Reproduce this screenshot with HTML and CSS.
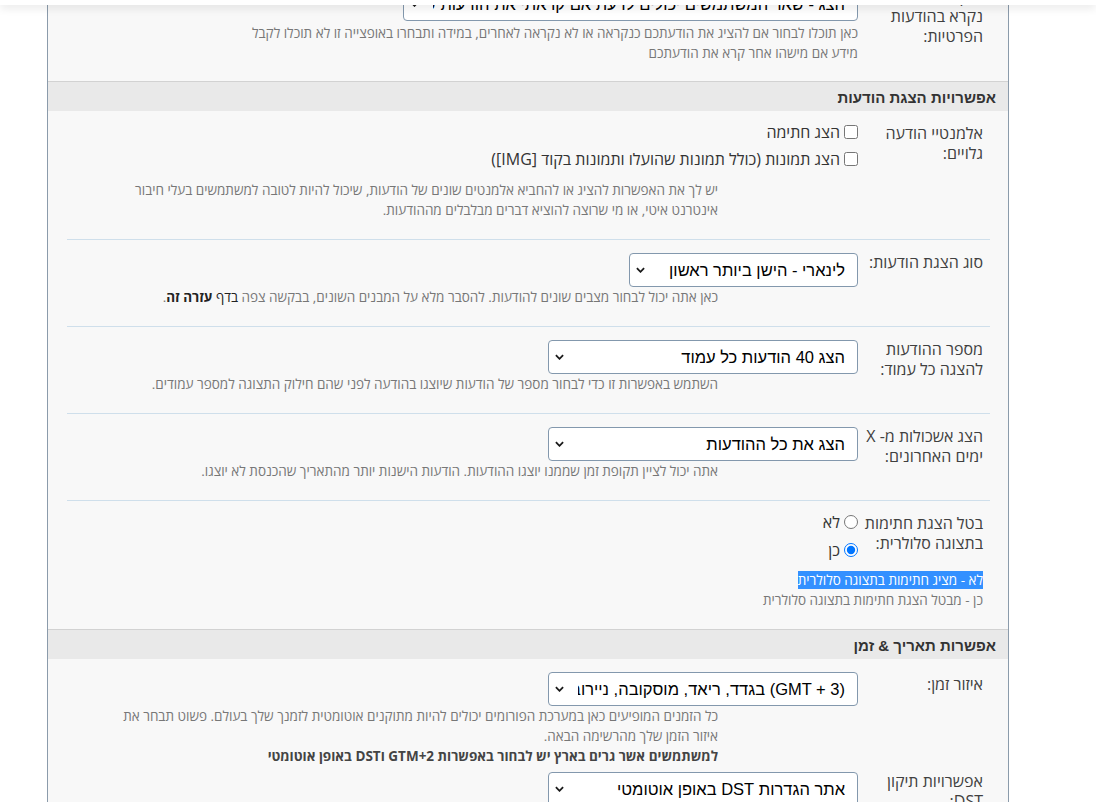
FILE: index.html
```html
<!DOCTYPE html>
<html lang="he" dir="rtl">
<head>
<meta charset="utf-8">
<title>הגדרות</title>
<link rel="stylesheet" href="styles.css">
</head>
<body>
<div class="topbar"></div>
<main class="panel">
  <div class="row no-sep row-first">
    <div class="label">סמן הודעה כ<br>נקרא בהודעות<br>הפרטיות:</div>
    <div class="control">
      <div class="select w455"><span class="sel-text">הצג - שאר המשתמשים יכולים לדעת אם קראתי את הודעות ששלחו אליי</span><svg class="chev" viewBox="0 0 10 6"><path d="M1 1 L5 5 L9 1"/></svg></div>
      <p class="desc desc-top">כאן תוכלו לבחור אם להציג את הודעתכם כנקראה או לא נקראה לאחרים, במידה ותבחרו באופצייה זו לא תוכלו לקבל מידע אם מישהו אחר קרא את הודעתכם</p>
    </div>
  </div>

  <h3 class="section">אפשרויות הצגת הודעות</h3>

  <div class="row">
    <div class="label">אלמנטיי הודעה גלויים:</div>
    <div class="control">
      <div class="options">
        <label class="opt"><input type="checkbox"><span>הצג חתימה</span></label>
        <label class="opt"><input type="checkbox"><span>הצג תמונות (כולל תמונות שהועלו ותמונות בקוד [IMG])</span></label>
      </div>
      <p class="desc desc-after-opts">יש לך את האפשרות להציג או להחביא אלמנטים שונים של הודעות, שיכול להיות לטובה למשתמשים בעלי חיבור אינטרנט איטי, או מי שרוצה להוציא דברים מבלבלים מההודעות.</p>
    </div>
  </div>

  <div class="row">
    <div class="label">סוג הצגת הודעות:</div>
    <div class="control">
      <div class="select w229"><span class="sel-text">לינארי - הישן ביותר ראשון</span><svg class="chev" viewBox="0 0 10 6"><path d="M1 1 L5 5 L9 1"/></svg></div>
      <p class="desc">כאן אתה יכול לבחור מצבים שונים להודעות. להסבר מלא על המבנים השונים, בבקשה צפה <a href="#">בדף <b>עזרה זה</b></a>.</p>
    </div>
  </div>

  <div class="row">
    <div class="label">מספר ההודעות להצגה כל עמוד:</div>
    <div class="control">
      <div class="select w310"><span class="sel-text">הצג 40 הודעות כל עמוד</span><svg class="chev" viewBox="0 0 10 6"><path d="M1 1 L5 5 L9 1"/></svg></div>
      <p class="desc">השתמש באפשרות זו כדי לבחור מספר של הודעות שיוצגו בהודעה לפני שהם חילוק התצוגה למספר עמודים.</p>
    </div>
  </div>

  <div class="row">
    <div class="label">הצג אשכולות מ- X ימים האחרונים:</div>
    <div class="control">
      <div class="select w310"><span class="sel-text">הצג את כל ההודעות</span><svg class="chev" viewBox="0 0 10 6"><path d="M1 1 L5 5 L9 1"/></svg></div>
      <p class="desc">אתה יכול לציין תקופת זמן שממנו יוצגו ההודעות. הודעות הישנות יותר מהתאריך שהכנסת לא יוצגו.</p>
    </div>
  </div>

  <div class="row no-sep row-radio">
    <div class="label">בטל הצגת חתימות בתצוגה סלולרית:</div>
    <div class="control">
      <div class="options radios">
        <label class="opt"><input type="radio" name="mobsig"><span>לא</span></label>
        <label class="opt"><input type="radio" name="mobsig" checked><span>כן</span></label>
      </div>
    </div>
    <p class="desc desc-wide"><span class="hl">לא - מציג חתימות בתצוגה סלולרית</span><br>כן - מבטל הצגת חתימות בתצוגה סלולרית</p>
  </div>

  <h3 class="section">אפשרות תאריך &amp; זמן</h3>

  <div class="row no-sep row-tz">
    <div class="label label-tz">איזור זמן:</div>
    <div class="control">
      <div class="select w310"><span class="sel-text">(GMT + 3) בגדד, ריאד, מוסקובה, ניירובי</span><svg class="chev" viewBox="0 0 10 6"><path d="M1 1 L5 5 L9 1"/></svg></div>
      <p class="desc">כל הזמנים המופיעים כאן במערכת הפורומים יכולים להיות מתוקנים אוטומטית לזמנך שלך בעולם. פשוט תבחר את איזור הזמן שלך מהרשימה הבאה.<br><strong>למשתמשים אשר גרים בארץ יש לבחור באפשרות GTM+2 וDST באופן אוטומטי</strong></p>
    </div>
  </div>

  <div class="row no-sep row-dst">
    <div class="label">אפשרויות תיקון DST:</div>
    <div class="control">
      <div class="select w310"><span class="sel-text">אתר הגדרות DST באופן אוטומטי</span><svg class="chev" viewBox="0 0 10 6"><path d="M1 1 L5 5 L9 1"/></svg></div>
      <p class="desc">בחר אם להשתמש בשעון קיץ באופן אוטומטי.</p>
    </div>
  </div>
</main>
</body>
</html>
```

FILE: styles.css
```css
html, body {
  margin: 0;
  padding: 0;
  background: #ffffff;
}

body {
  font-family: "Open Sans", "DejaVu Sans", sans-serif;
  color: #3c3c3c;
}

.topbar {
  position: fixed;
  top: 0;
  left: 0;
  right: 0;
  height: 5px;
  background: #ffffff;
  box-shadow: 0 2px 10px rgba(0, 0, 0, 0.14);
  z-index: 10;
}

.panel {
  margin: -26px 87px 0 47px;
  background: #f8f8f8;
  border-left: 1px solid #8b9bab;
  border-right: 1px solid #8b9bab;
  padding-bottom: 60px;
}

.row {
  display: grid;
  grid-template-columns: 122px 1fr;
  column-gap: 3px;
  align-items: start;
  margin: 0 18px 0 19px;
  padding: 12px 7px 19px 0;
  border-bottom: 1px solid #cfdfeb;
}

.row.no-sep {
  border-bottom: none;
}

.row.row-first {
  padding-bottom: 18px;
}

.row.row-tz {
  padding-bottom: 0;
}

.row.row-dst {
  padding-top: 5px;
}

.label {
  font-size: 16px;
  line-height: 20px;
  color: #404040;
}

.label-tz {
  padding-top: 3px;
}

.control {
  min-width: 0;
}

.section {
  margin: 0;
  box-sizing: border-box;
  height: 30px;
  padding: 4px 12px 0 0;
  border-top: 1px solid #d2d2d2;
  background: #e9e9e9;
  font: bold 15px/24px "Liberation Sans", Arial, sans-serif;
  color: #333333;
}

.select {
  display: flex;
  align-items: center;
  box-sizing: border-box;
  height: 34px;
  margin-top: 1px;
  padding: 0 12px 0 6px;
  border: 1px solid #8398ad;
  border-radius: 4px;
  background: #ffffff;
  font: 16.5px "Liberation Sans", Arial, sans-serif;
  color: #000000;
}

.w229 { width: 229px; }
.w310 { width: 310px; }
.w455 { width: 455px; }

.sel-text {
  flex: 1;
  min-width: 0;
  overflow: hidden;
  white-space: nowrap;
  margin-left: 14px;
}

.chev {
  flex: none;
  width: 9px;
  height: 6px;
  fill: none;
  stroke: #1a1a1a;
  stroke-width: 2;
}

.desc {
  margin: 0 140px 0 0;
  max-width: 600px;
  font-size: 13.5px;
  line-height: 20px;
  color: #777777;
}

.desc.desc-top {
  margin: 2px 0 0 0;
  max-width: 612px;
}

.desc a {
  color: #222222;
  text-decoration: none;
}

.desc strong {
  color: #444444;
  font-weight: bold;
}

.options {
  display: flex;
  flex-direction: column;
  gap: 7px;
  margin-top: -1px;
}

.options.radios {
  gap: 8px;
  margin-top: -1px;
}

.opt {
  display: flex;
  align-items: center;
  gap: 4px;
  font-size: 16px;
  line-height: 20px;
  color: #333333;
}

.opt input {
  margin: 0;
  width: 14px;
  height: 14px;
}

.desc.desc-after-opts {
  margin-top: 11px;
}

.desc.desc-wide {
  grid-column: 1 / -1;
  margin: 10px 0 0 0;
  max-width: none;
}

.hl {
  background: #3390ff;
  color: #ffffff;
}
```
